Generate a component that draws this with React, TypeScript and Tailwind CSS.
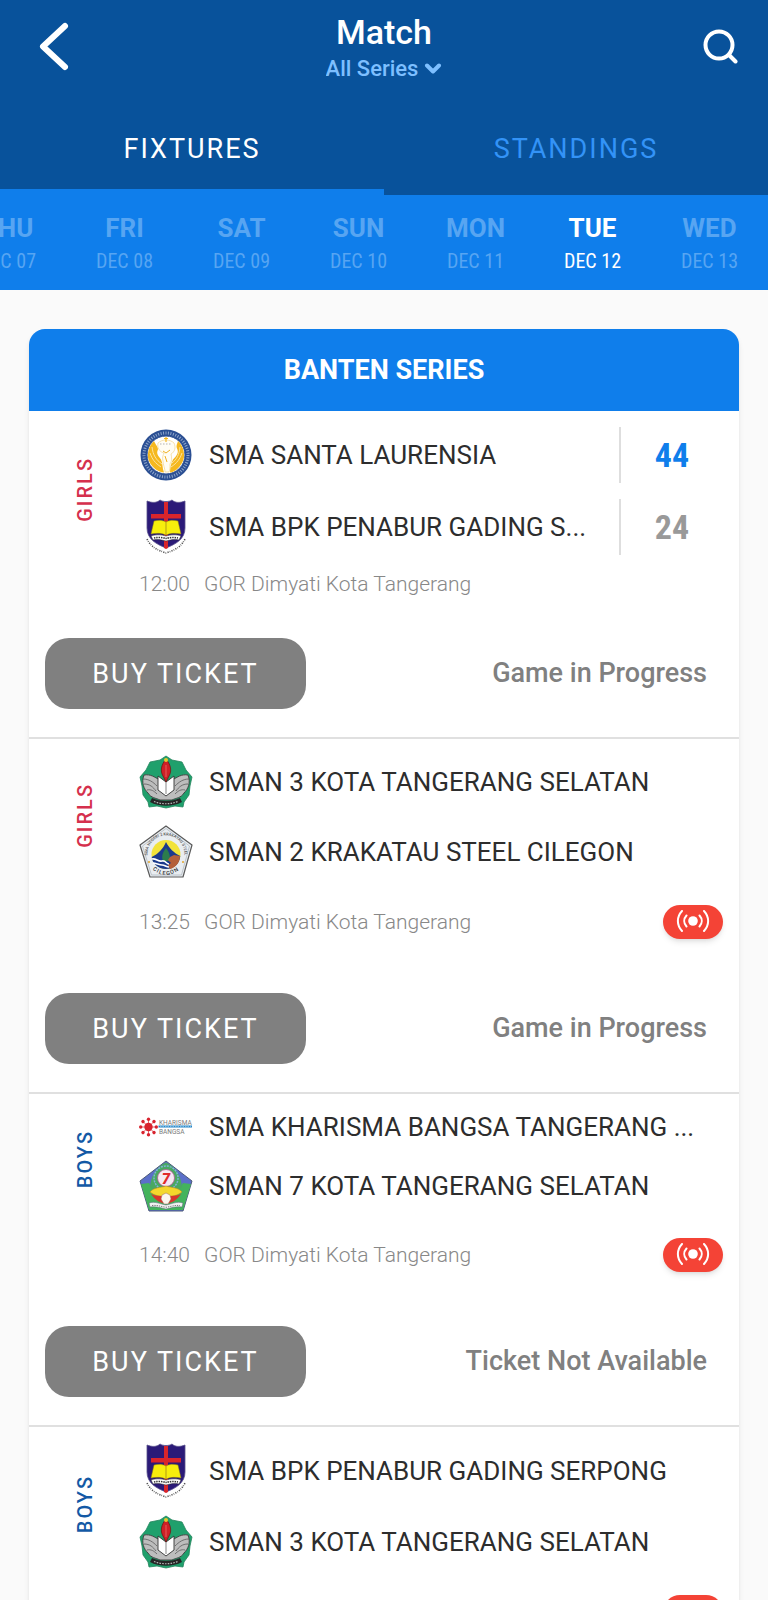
import React, { useState } from 'react';

type Division = 'GIRLS' | 'BOYS';
type Crest = 'laurensia' | 'penabur' | 'sman3' | 'krakatau' | 'kharisma' | 'sman7';

interface Team {
  name: string;
  crest: Crest;
  score?: number;
}

interface Match {
  id: number;
  division: Division;
  teams: [Team, Team];
  time: string;
  venue: string;
  live: boolean;
  status: string;
}

const DAYS = [
  { day: 'THU', date: 'DEC 07' },
  { day: 'FRI', date: 'DEC 08' },
  { day: 'SAT', date: 'DEC 09' },
  { day: 'SUN', date: 'DEC 10' },
  { day: 'MON', date: 'DEC 11' },
  { day: 'TUE', date: 'DEC 12' },
  { day: 'WED', date: 'DEC 13' },
];

const VENUE = 'GOR Dimyati Kota Tangerang';

const MATCHES: Match[] = [
  {
    id: 1,
    division: 'GIRLS',
    teams: [
      { name: 'SMA SANTA LAURENSIA', crest: 'laurensia', score: 44 },
      { name: 'SMA BPK PENABUR GADING S...', crest: 'penabur', score: 24 },
    ],
    time: '12:00',
    venue: VENUE,
    live: false,
    status: 'Game in Progress',
  },
  {
    id: 2,
    division: 'GIRLS',
    teams: [
      { name: 'SMAN 3 KOTA TANGERANG SELATAN', crest: 'sman3' },
      { name: 'SMAN 2 KRAKATAU STEEL CILEGON', crest: 'krakatau' },
    ],
    time: '13:25',
    venue: VENUE,
    live: true,
    status: 'Game in Progress',
  },
  {
    id: 3,
    division: 'BOYS',
    teams: [
      { name: 'SMA KHARISMA BANGSA TANGERANG ...', crest: 'kharisma' },
      { name: 'SMAN 7 KOTA TANGERANG SELATAN', crest: 'sman7' },
    ],
    time: '14:40',
    venue: VENUE,
    live: true,
    status: 'Ticket Not Available',
  },
  {
    id: 4,
    division: 'BOYS',
    teams: [
      { name: 'SMA BPK PENABUR GADING SERPONG', crest: 'penabur' },
      { name: 'SMAN 3 KOTA TANGERANG SELATAN', crest: 'sman3' },
    ],
    time: '16:00',
    venue: VENUE,
    live: true,
    status: 'Ticket Not Available',
  },
];

const LaurensiaCrest = () => (
  <svg viewBox="0 0 52 52" className="w-[52px] h-[52px]" aria-hidden="true">
    <circle cx="26" cy="26" r="25.5" fill="#2b4f93" />
    <circle cx="26" cy="26" r="22" fill="none" stroke="#8fa6cc" strokeWidth="3" strokeDasharray="1 1.5" />
    <circle cx="26" cy="26" r="19" fill="#fff" stroke="#2b4f93" strokeWidth="1" />
    <path d="M14 12C8 17 6 28 10 34c3 5 8 9 14 9.500-2-5-1-9-3-13-3-4-5-6-3-10 0-3-2-4-4-8.500z" fill="#f5b81f" />
    <path d="M38 12c6 5 8 16 4 22-3 5-7 9-12 9.500 0-5 1-9 3-13 4-4 6-7 4-11-1-3 0-4 1-7.500z" fill="#f5b81f" />
    <path d="M12 18c1 8 4 13 10 17M10 24c2 6 5 10 11 14M40 18c-1 8-3 12-8 16M42 24c-2 6-5 10-11 14" fill="none" stroke="#fbe3a0" strokeWidth="1" />
    <path d="M18 14c4-4 12-4 16 0 2 4 1 9-3 11 1 4 1 7-1 10 0 3 0 6-1 8h-4c0-4-2-7-2-11-1-3 0-6 1-8-5-1-7-6-6-10z" fill="#fffdf4" stroke="#f0cf78" strokeWidth=".6" />
    <path d="M26 8v5M24 9.500h4" stroke="#f5b81f" strokeWidth="1.2" />
    <path d="M20 15h12" stroke="#b4b4b4" strokeWidth="1.2" strokeDasharray="1.5 1.5" />
    <path d="M23 22l3 2 4-3M25 27l2 6" fill="none" stroke="#f0b020" strokeWidth="1" />
  </svg>
);

const PenaburCrest = () => (
  <svg viewBox="0 0 42 56" className="w-[42px] h-[56px]" aria-hidden="true">
    <path d="M2 2c5 2 10 2 13-1 3 2 9 2 12 0 3 3 8 3 13 1v27c0 11-9 16-19 20C11 45 2 40 2 29z" fill="#2b1a78" stroke="#58508c" strokeWidth=".8" />
    <path d="M19 3h4v46l-2 1-2-1zM6 15h30v4.500H6z" fill="#d9252b" />
    <path d="M9 22c4-1 9-1 12 1 3-2 8-2 12-1l3 13c-5-1-11-1-15 1-4-2-10-2-15-1z" fill="#f7ee0c" stroke="#8a7a10" strokeWidth=".5" />
    <path d="M21 23v13" stroke="#b39b17" strokeWidth="1" />
    <path d="M6 37c6-2 11-1 15 0 4-1 10-2 15 0l-2 4c-5-1-9 0-13 1-4-1-8-2-13-1z" fill="#fff" stroke="#222" strokeWidth=".5" />
    <path d="M9 39c4-.8 9-.6 12 .5 3-1 8-1.300 12-.5" fill="none" stroke="#333" strokeWidth="1.6" strokeDasharray="1.4 .9" />
    <path d="M2 40c4 8 10 11 19 14 9-3 15-6 19-14" fill="none" stroke="#555" strokeWidth="1.6" strokeDasharray="1.2 1.1 .7 1.3" />
  </svg>
);

const Sman3Crest = () => (
  <svg viewBox="0 0 54 54" className="w-[54px] h-[54px]" aria-hidden="true">
    <path d="M27 1l6 4 10 2 4 8 6 7-2 9-1 9-5 7-1 5-8-1-9 2-9-2-8 1-1-5-5-7-1-9-2-9 6-7 4-8 10-2z" fill="#1fa06c" stroke="#24835c" strokeWidth=".8" />
    <path d="M5 20c7-1 10 2 16 5l6 5 6-5c6-3 9-6 16-5 3 8 0 14-4 18-3 5-8 5-12 7H21c-4-2-9-2-12-7-4-4-7-10-4-18z" fill="#bdbdbd" stroke="#3c3c3c" strokeWidth=".9" />
    <path d="M4 24c6 0 10 3 14 7M5 29c6 0 9 3 12 7M8 35c4-1 7 1 10 4M50 24c-6 0-10 3-14 7M49 29c-6 0-9 3-12 7M46 35c-4-1-7 1-10 4" fill="none" stroke="#666" strokeWidth=".9" />
    <path d="M19 21l8 6 8-6v14l-8 6-8-6z" fill="#fff" stroke="#333" strokeWidth=".9" />
    <path d="M27 27v12" stroke="#555" strokeWidth=".7" />
    <path d="M27 4c5 6 6 12 3 17l-3 6-3-6c-3-5-2-11 3-17z" fill="#cf2027" stroke="#611" strokeWidth=".7" />
    <path d="M27 10v12" stroke="#f28b82" strokeWidth=".6" />
    <circle cx="27" cy="5" r="2" fill="#e8c92d" />
    <path d="M13 43c8 4 20 4 28 0l2 4c-9 5-23 5-32 0z" fill="#252525" />
    <path d="M15 46.500c8 3 16 3 24 0" fill="none" stroke="#b5b5b5" strokeWidth="1.2" strokeDasharray="1.6 1.2" />
  </svg>
);

const KrakatauCrest = () => (
  <svg viewBox="0 0 54 54" className="w-[54px] h-[54px]" aria-hidden="true">
    <defs>
      <path id="krakatau-top" d="M9.500 35A18.500 18.500 0 1 1 44.500 35" />
      <path id="krakatau-bottom" d="M9 40Q27 60 45 40" />
    </defs>
    <path d="M27 1l26 19-9 32H11L1 20z" fill="#e9edf1" stroke="#5a5a5a" strokeWidth="1.2" strokeLinejoin="round" />
    <path d="M27 3.500l23.500 17.500-8 29H12.500L3.500 21z" fill="none" stroke="#aab2b9" strokeWidth=".7" />
    <circle cx="27" cy="29.500" r="14.500" fill="#f2e33a" />
    <path d="M27 17c3 6 8 11 14.300 14-.6 7-6 13-14.300 13s-13.800-6-14.300-12C19 29 24 24 27 17z" fill="#1b3a8c" />
    <path d="M27 23c3 4 5 8 3 13h-6c-2-5 0-9 3-13z" fill="#2c7c4c" />
    <path d="M31 32l4-2 6 1c0 7-5 12-10 13l-2-4 3-2-3-3z" fill="#b5603a" />
    <path d="M13 34c4-1 6 3 10 2s4 3 7 3M14 38c3 0 6 2 9 2s4 2 7 2" fill="none" stroke="#fff" strokeWidth="1.6" />
    <text fontSize="4" fontFamily="Roboto, sans-serif" fontWeight="500" fill="#555" textAnchor="middle">
      <textPath href="#krakatau-top" startOffset="50%">SMA NEGERI 2 KRAKATAU STEEL</textPath>
    </text>
    <text fontSize="5.5" fontFamily="Roboto, sans-serif" fontWeight="500" fill="#333" textAnchor="middle" className="tracking-[1px]">
      <textPath href="#krakatau-bottom" startOffset="50%">CILEGON</textPath>
    </text>
    <circle cx="10" cy="37" r="1" fill="#e0a52e" />
    <circle cx="44" cy="37" r="1" fill="#e0a52e" />
  </svg>
);

const KharismaCrest = () => (
  <svg viewBox="0 0 54 20" className="w-[54px] h-[20px]" aria-hidden="true">
    <circle cx="9.500" cy="10" r="4.200" fill="#d8232e" />
    {[0, 45, 90, 135, 180, 225, 270, 315].map((angle) => (
      <g key={angle} transform={`rotate(${angle} 9.5 10)`}>
        <circle cx="9.500" cy="2.200" r="1.700" fill="#d8232e" />
        <path d="M9.500 3v4" stroke="#d8232e" strokeWidth=".7" />
      </g>
    ))}
    <text x="20" y="7.5" fontSize="6.5" fontFamily="Roboto, sans-serif" fill="#7a7a7a">KHARISMA</text>
    <path d="M19.500 9.500H53" stroke="#2586c8" strokeWidth="2.200" />
    <path d="M21 9.500h31" stroke="#9fd0ee" strokeWidth=".7" strokeDasharray="1.5 1" />
    <text x="20" y="16.500" fontSize="6.5" fontFamily="Roboto, sans-serif" fill="#7a7a7a">BANGSA</text>
  </svg>
);

const Sman7Crest = () => (
  <svg viewBox="0 0 54 52" className="w-[54px] h-[52px]" aria-hidden="true">
    <path d="M27 1l26 20-9 30H10L1 21z" fill="#5b6fc9" stroke="#4c5a78" strokeWidth="1" strokeLinejoin="round" />
    <path d="M2 24l8-1 6 10h22l6-10 8 1-8 26H10z" fill="#43b35c" />
    <path d="M27 2.500c11 5 15 15 16 24-3 5-7 8-16 8s-13-3-16-8c1-9 5-19 16-24z" fill="#49a862" />
    <circle cx="27" cy="18" r="12" fill="none" stroke="#7fb2d8" strokeWidth="1.5" strokeDasharray="2 1" />
    <circle cx="27" cy="18" r="8.500" fill="#f5e9f2" stroke="#b05a90" strokeWidth=".8" />
    <text x="27" y="23.500" fontSize="15" fontFamily="Roboto, sans-serif" fontWeight="900" fontStyle="italic" fill="#e02a2a" textAnchor="middle">7</text>
    <path d="M11 32c4-5 10-4 16-6 6 2 12 1 16 6-5 4-9 4-16 5-7-1-11-1-16-5z" fill="#f4d72c" stroke="#c48a1c" strokeWidth=".6" />
    <path d="M12 34c4 6 9 9 15 10 6-1 11-4 15-10-4 2-9 2-15 2s-11 0-15-2z" fill="#d8342c" />
    <path d="M27 33l4 2 1 4-3 5h-4l-3-5 1-4z" fill="#fbf6ee" stroke="#9a6a55" strokeWidth=".5" />
    <path d="M10 43c6-2 11 1 17 2 6-1 11-4 17-2l-1 4c-6-1-11 1-16 2-5-1-10-3-16-2z" fill="#f2f2f2" stroke="#567" strokeWidth=".5" />
    <path d="M13 45.500c5-.5 9 1 14 1.800 5-.8 9-2.300 14-1.800" fill="none" stroke="#777" strokeWidth="1" strokeDasharray="1.3 1" />
  </svg>
);

const CRESTS: Record<Crest, React.FC> = {
  laurensia: LaurensiaCrest,
  penabur: PenaburCrest,
  sman3: Sman3Crest,
  krakatau: KrakatauCrest,
  kharisma: KharismaCrest,
  sman7: Sman7Crest,
};

const LiveBadge = () => (
  <a href="#live" aria-label="Watch live" className="ml-auto flex h-[34px] w-[60px] items-center justify-center rounded-full bg-[#f44336] text-white shadow-md">
    <svg viewBox="0 0 34 24" className="w-[34px] h-6" fill="none" stroke="currentColor" strokeWidth="2" strokeLinecap="round">
      <circle cx="17" cy="11" r="4.800" fill="currentColor" stroke="none" />
      <path d="M10.500 5.500c-3 3.300-3 7.700 0 11M6 1C.5 7 .5 15 6 21M23.500 5.500c3 3.300 3 7.700 0 11M28 1c5.500 6 5.500 14 0 20" />
    </svg>
  </a>
);

const TeamRow: React.FC<{ team: Team; winning: boolean }> = ({ team, winning }) => {
  const Logo = CRESTS[team.crest];
  const hasScore = team.score !== undefined;

  return (
    <li className={`flex items-center ${hasScore ? 'h-14' : ''}`}>
      <span className="flex w-[54px] shrink-0 justify-center"><Logo /></span>
      <span className="ml-4 flex-1 whitespace-nowrap text-[26px] leading-[34px] text-[#2d2d2d]">{team.name}</span>
      {hasScore && (
        <span className={`flex h-full w-[104px] shrink-0 items-center justify-center border-l-2 border-[#dedede] font-['Roboto_Condensed','Roboto',sans-serif] text-[34px] font-bold ${winning ? 'text-[#0f7eeb]' : 'text-[#999999]'}`}>
          {team.score}
        </span>
      )}
    </li>
  );
};

const MatchCard: React.FC<{ match: Match }> = ({ match }) => {
  const [home, away] = match.teams;
  const top = Math.max(home.score ?? 0, away.score ?? 0);

  return (
    <article className="border-b-2 border-[#e0e0e0] px-4 pt-4 pb-7">
      <div className="flex">
        <div className="flex w-[94px] shrink-0 items-center pb-1 pl-7">
          <span className={`rotate-180 text-xl leading-6 font-medium tracking-[2px] [writing-mode:vertical-rl] ${match.division === 'GIRLS' ? 'text-[#d5304d]' : 'text-[#1359a5]'}`}>
            {match.division}
          </span>
        </div>
        <ul className="flex min-w-0 flex-1 flex-col gap-4">
          {match.teams.map((team) => (
            <TeamRow key={team.name} team={team} winning={team.score === top} />
          ))}
        </ul>
      </div>

      <div className={`flex items-center pl-[94px] text-[21px] leading-[26px] font-light text-[#888888] ${match.live ? 'mt-[26px] mb-[54px]' : 'mt-4 mb-[41px]'}`}>
        <time>{match.time}</time>
        <span className="ml-3.5">{match.venue}</span>
        {match.live && <LiveBadge />}
      </div>

      <div className="flex items-center justify-between pr-4">
        <button type="button" className="h-[71px] w-[261px] rounded-3xl bg-[#808080] pt-0.5 text-[27px] tracking-[2px] text-white">
          BUY TICKET
        </button>
        <p className="text-[27px] font-medium text-[#808080]">{match.status}</p>
      </div>
    </article>
  );
};

const App: React.FC = () => {
  const [tab, setTab] = useState<'FIXTURES' | 'STANDINGS'>('FIXTURES');
  const [selected, setSelected] = useState('DEC 12');

  return (
    <div className="min-h-screen overflow-x-hidden bg-[#fafafa] font-['Roboto',sans-serif]">
      {/* Title bar */}
      <header className="bg-[#08529b]">
        <div className="grid h-[109px] grid-cols-[1fr_auto_1fr] items-start px-[30px]">
          <button type="button" aria-label="Back" className="mt-5 justify-self-start px-1 text-white">
            <svg viewBox="0 0 36 52" className="h-[52px] w-9" fill="none" stroke="currentColor" strokeWidth="6" strokeLinecap="round" strokeLinejoin="round">
              <path d="M31 6L9 26.500 31 47" />
            </svg>
          </button>
          <div className="flex flex-col items-center pt-3">
            <h1 className="text-[34px] leading-10 font-medium text-white">Match</h1>
            <label className="relative flex items-center">
              <span className="sr-only">Series</span>
              <select className="field-sizing-content appearance-none bg-transparent pr-6 text-[22px] leading-[34px] font-medium text-[#7dbfff]">
                <option>All Series</option>
              </select>
              <svg viewBox="0 0 18 12" className="pointer-events-none absolute right-0 h-3 w-[18px]" fill="none" stroke="#7dbfff" strokeWidth="4" strokeLinecap="round" strokeLinejoin="round">
                <path d="M3 2.500l6 6 6-6" />
              </svg>
            </label>
          </div>
          <button type="button" aria-label="Search" className="mt-7 justify-self-end text-white">
            <svg viewBox="0 0 36 36" className="h-9 w-9" fill="none" stroke="currentColor" strokeWidth="4" strokeLinecap="round">
              <circle cx="17" cy="17" r="13.500" />
              <path d="M27 27l6.500 6.500" />
            </svg>
          </button>
        </div>

        <nav className="grid grid-cols-2">
          {(['FIXTURES', 'STANDINGS'] as const).map((name) => (
            <button
              key={name}
              type="button"
              onClick={() => setTab(name)}
              className={`h-[86px] border-b-6 text-[27px] tracking-[2px] ${tab === name ? 'border-[#0f7eeb] text-white' : 'border-transparent text-[#3393f7]'}`}
            >
              {name}
            </button>
          ))}
        </nav>
      </header>

      {/* Day picker */}
      <div className="flex h-[95px] justify-end overflow-hidden bg-[#0f7eeb]">
        {DAYS.map(({ day, date }) => (
          <button
            key={date}
            type="button"
            onClick={() => setSelected(date)}
            className={`flex w-[117px] shrink-0 flex-col items-center pt-4 ${selected === date ? 'text-white' : 'text-[#57a5f2]'}`}
          >
            <span className="text-[26px] leading-[34px] font-bold">{day}</span>
            <span className="font-['Roboto_Condensed','Liberation_Sans_Narrow','Roboto',sans-serif] text-xl leading-8">{date}</span>
          </button>
        ))}
      </div>

      <main className="px-[29px] pt-[39px]">
        <section className="overflow-hidden rounded-t-2xl bg-white shadow-md">
          <h2 className="bg-[#0f7eeb] text-center text-[27px] leading-[82px] font-bold text-white">BANTEN SERIES</h2>
          {MATCHES.map((match) => (
            <MatchCard key={match.id} match={match} />
          ))}
        </section>
      </main>
    </div>
  );
};

export default App;
